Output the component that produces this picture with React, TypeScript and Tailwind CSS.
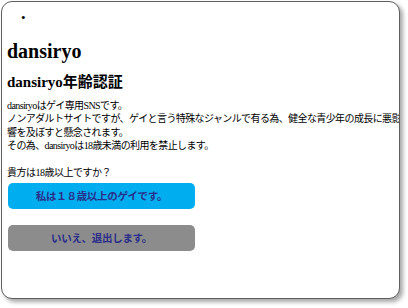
export default function App() {
    const serif = "font-['Liberation_Serif','Noto_Sans_CJK_JP',serif]";
    return (
        <div className="w-[408px] h-[308px] bg-white pt-px pl-px">
            <div
                className={`w-[399px] h-[298px] border border-[#5e5e5e] rounded-[11px] overflow-hidden bg-white shadow-[3px_3px_4px_rgba(0,0,0,0.35)] px-[5px] text-black ${serif}`}
            >
                {/* empty nav list */}
                <div className="h-[37px] pl-[14px] pt-[9px] text-[13px] leading-[14px]">•</div>

                <h1 className="h-[24px] text-[20px] leading-[24px] font-bold">dansiryo</h1>

                <h2 className="mt-[9px] text-[15px] leading-[20px] font-bold">dansiryo年齢認証</h2>

                <div className="mt-[7px] text-[10px] leading-[13.3px] whitespace-nowrap tracking-[-0.6px]">
                    <p>dansiryoはゲイ専用SNSです。</p>
                    <p>ノンアダルトサイトですが、ゲイと言う特殊なジャンルで有る為、健全な青少年の成長に悪影</p>
                    <p>響を及ぼすと懸念されます。</p>
                    <p>その為、dansiryoは18歳未満の利用を禁止します。</p>
                </div>

                <p className="mt-[14px] text-[10px] leading-[13px] tracking-[-0.5px]">貴方は18歳以上ですか？</p>

                <div className="ml-px mt-[4px] flex flex-col gap-[16px]">
                    <button className="w-[187px] h-[26px] rounded-[5px] bg-[#00adef] text-[#2b2d8a] text-[10.5px] font-bold tracking-[-0.3px] font-['Noto_Sans_CJK_JP',sans-serif]">
                        私は１８歳以上のゲイです。
                    </button>
                    <button className="w-[187px] h-[26px] rounded-[5px] bg-[#8c8c8c] text-[#2b2d8a] text-[10.5px] font-bold tracking-[-0.3px] font-['Noto_Sans_CJK_JP',sans-serif]">
                        いいえ、退出します。
                    </button>
                </div>
            </div>
        </div>
    );
}
